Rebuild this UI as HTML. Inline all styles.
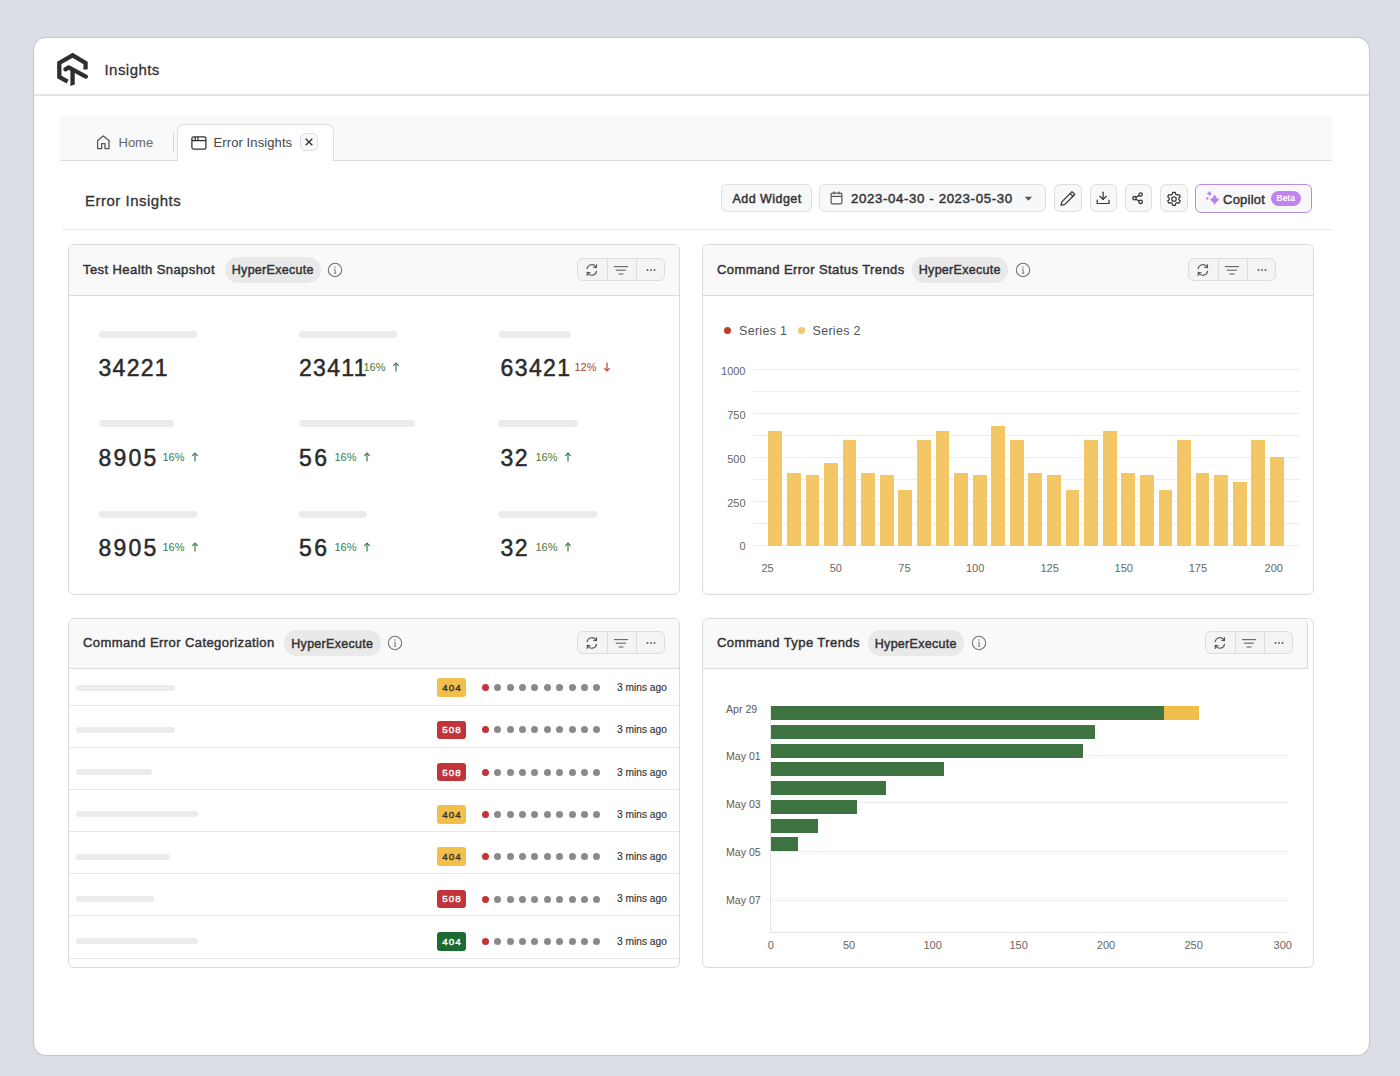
<!DOCTYPE html><html><head><meta charset="utf-8"><style>
*{margin:0;padding:0;box-sizing:border-box}
html,body{width:1400px;height:1076px;overflow:hidden;background:#dcdee6;font-family:"Liberation Sans", sans-serif;color:#333}
.a{position:absolute}
.t{position:absolute;white-space:nowrap;line-height:1}
.med{-webkit-text-stroke:0.45px currentColor}
#frame{position:absolute;left:33px;top:37px;width:1337px;height:1019px;background:#fff;border:1.8px solid #c8c9cc;border-radius:13px;overflow:hidden;box-shadow:0 0 2px rgba(0,0,0,0.05)}
.btn{position:absolute;background:#f7f8f9;border:1px solid #dedfe1;border-radius:6px}
.card{position:absolute;background:#fff;border:1px solid #d9dadc;border-radius:6px;overflow:hidden}
.chead{position:absolute;left:0;top:0;right:0;height:50.6px;background:#f9f9fa;border-bottom:1px solid #d9dadc}
.pill{position:absolute;height:26px;background:#e9e9ea;border-radius:13px}
.sk{position:absolute;height:7px;background:#ebebeb;border-radius:4px}
.vb{position:absolute;width:13.9px;background:#f3c766}
.hb{position:absolute;height:14px;background:#3e7442}
.grp{position:absolute;height:23px;background:#f4f4f5;border:1px solid #dcdcde;border-radius:6px}
.badge{position:absolute;width:28.5px;height:18.5px;border-radius:3px;color:#fff;font-size:9.8px;letter-spacing:1px;text-indent:1px;line-height:18.5px;text-align:center;-webkit-text-stroke:0.4px currentColor}
.dot{position:absolute;width:7px;height:7px;border-radius:50%;background:#8a8a8a}
</style></head><body>
<div id="frame"></div>
<svg class="a" style="left:52px;top:48px" width="42" height="44" viewBox="0 0 42 44">
<g fill="none" stroke="#2f2f2f" stroke-width="4.3">
<polyline points="15.6,33.6 7.3,28.9 7.3,14.9 20.6,7.35 33.55,14.9 33.55,21.6" stroke-linejoin="miter"/>
<polyline points="13.4,21.3 16.7,19.4 33.9,28.6" stroke-linecap="round" stroke-linejoin="round"/>
</g>
<path d="M18.4,21.5 L22.75,23.2 L22.75,36.4 L18.4,37.9 Z" fill="#2f2f2f"/>
</svg>
<div class="t" style="left:104.5px;top:61.8px;font-size:15px;letter-spacing:0.45px;color:#333;-webkit-text-stroke:0.3px #333">Insights</div>
<div class="a" style="left:34px;top:94px;width:1335px;height:1.5px;background:#e4e4e6"></div>
<div class="a" style="left:60px;top:114.5px;width:1272px;height:46px;background:#f9f9fa;border-bottom:1px solid #dcdcde"></div>
<svg class="a" style="left:96px;top:134.5px" width="15" height="15" viewBox="0 0 15 15">
<path d="M1.6,13.6 V5.6 L7.3,1 L13,5.6 V13.6 H9 V8.6 H5.6 V13.6 Z" fill="none" stroke="#555" stroke-width="1.3" stroke-linejoin="round"/></svg>
<div class="t" style="left:118.5px;top:136px;font-size:13px;color:#666">Home</div>
<div class="a" style="left:172.5px;top:132px;width:1px;height:21px;background:#d5d6d8"></div>
<div class="a" style="left:176.5px;top:124px;width:157px;height:37px;background:#fff;border:1px solid #dcdde0;border-bottom:none;border-radius:7px 7px 0 0"></div>
<svg class="a" style="left:190.5px;top:135.5px" width="16" height="14" viewBox="0 0 16 14">
<g fill="none" stroke="#333" stroke-width="1.3"><rect x="0.9" y="0.9" width="14" height="12.2" rx="1.6"/>
<line x1="0.9" y1="4.6" x2="14.9" y2="4.6"/><line x1="4.2" y1="1" x2="4.2" y2="4.6"/><line x1="6.9" y1="1" x2="6.9" y2="4.6"/></g></svg>
<div class="t" style="left:213.5px;top:136px;font-size:13px;letter-spacing:0.1px;color:#444">Error Insights</div>
<div class="btn" style="left:300.3px;top:133.3px;width:18px;height:18px;border-radius:5px;background:#f7f8f9"></div>
<svg class="a" style="left:304.3px;top:137px" width="10" height="10" viewBox="0 0 10 10"><g stroke="#333" stroke-width="1.3"><line x1="1.7" y1="1.7" x2="8.3" y2="8.3"/><line x1="8.3" y1="1.7" x2="1.7" y2="8.3"/></g></svg>
<div class="t" style="left:85px;top:193px;font-size:15px;letter-spacing:0.5px;color:#333;-webkit-text-stroke:0.3px #333">Error Insights</div>
<div class="a" style="left:62px;top:228.5px;width:1270px;height:1px;background:#ececee"></div>
<div class="btn" style="left:720.8px;top:184px;width:91px;height:28px"></div>
<div class="t med" style="left:732.5px;top:192.6px;font-size:12.5px;letter-spacing:0.45px;color:#333">Add Widget</div>
<div class="btn" style="left:819px;top:184px;width:227px;height:28px"></div>
<svg class="a" style="left:830px;top:191px" width="13" height="14" viewBox="0 0 13 14"><g fill="none" stroke="#555" stroke-width="1.2">
<rect x="1.1" y="2.1" width="10.8" height="10.8" rx="1.4"/><line x1="1.1" y1="5.4" x2="11.9" y2="5.4"/><line x1="4" y1="0.6" x2="4" y2="3.2"/><line x1="9" y1="0.6" x2="9" y2="3.2"/></g></svg>
<div class="t med" style="left:851px;top:192.3px;font-size:13.3px;color:#333;letter-spacing:0.6px">2023-04-30 - 2023-05-30</div>
<svg class="a" style="left:1024.3px;top:196.2px" width="9" height="6" viewBox="0 0 9 6"><path d="M0.8,0.8 H8 L4.4,4.8 Z" fill="#555"/></svg>
<div class="btn" style="left:1054px;top:184px;width:27.5px;height:28px"></div>
<div class="btn" style="left:1089.5px;top:184px;width:27.5px;height:28px"></div>
<div class="btn" style="left:1124.8px;top:184px;width:27.5px;height:28px"></div>
<div class="btn" style="left:1160px;top:184px;width:27.5px;height:28px"></div>
<svg class="a" style="left:1054px;top:184.5px" width="28" height="28" viewBox="0 0 28 28"><g fill="none" stroke="#333" stroke-width="1.2" stroke-linejoin="round">
<path d="M7,20.2 L7.8,16.9 L18,6.7 L20.8,9.5 L10.6,19.7 Z"/><line x1="16.2" y1="8.5" x2="19" y2="11.3"/></g></svg>
<svg class="a" style="left:1094px;top:189px" width="18" height="18" viewBox="0 0 18 18"><g fill="none" stroke="#333" stroke-width="1.2" stroke-linecap="round" stroke-linejoin="round">
<line x1="9.1" y1="3.2" x2="9.1" y2="10.3"/><polyline points="5.9,7.3 9.1,10.4 12.3,7.3"/><polyline points="3.2,11.2 3.2,14.5 15,14.5 15,11.2"/></g></svg>
<svg class="a" style="left:1129px;top:189px" width="18" height="18" viewBox="0 0 18 18"><g fill="none" stroke="#333" stroke-width="1.3">
<circle cx="5.5" cy="9.2" r="1.7"/><circle cx="11.6" cy="5.6" r="1.7"/><circle cx="11.6" cy="12.9" r="1.7"/><line x1="6.9" y1="8.3" x2="10" y2="6.6"/><line x1="6.9" y1="10.3" x2="10" y2="12"/></g></svg>
<svg class="a" style="left:1164.5px;top:189.5px" width="18" height="18" viewBox="0 0 24 24"><g fill="none" stroke="#333" stroke-width="1.6" stroke-linejoin="round">
<path d="M10.3,3.2 h3.4 l0.6,2.5 l1.9,1.1 l2.5,-0.8 l1.7,2.9 l-1.9,1.8 v2.2 l1.9,1.8 l-1.7,2.9 l-2.5,-0.8 l-1.9,1.1 l-0.6,2.5 h-3.4 l-0.6,-2.5 l-1.9,-1.1 l-2.5,0.8 l-1.7,-2.9 l1.9,-1.8 v-2.2 l-1.9,-1.8 l1.7,-2.9 l2.5,0.8 l1.9,-1.1 Z"/>
<circle cx="12" cy="12" r="3"/></g></svg>
<div class="btn" style="left:1195px;top:184px;width:116.7px;height:28.5px;border:1.5px solid #b88be3;background:#f8f8fa"></div>
<svg class="a" style="left:1204px;top:190px" width="17" height="17" viewBox="0 0 17 17"><g fill="#b880ea">
<path d="M10.60,4.40 Q11.97,8.22 15.50,9.70 Q11.97,11.18 10.60,15.00 Q9.23,11.18 5.70,9.70 Q9.23,8.22 10.60,4.40 Z"/>
<path d="M5.50,0.80 Q6.26,2.74 8.20,3.50 Q6.26,4.26 5.50,6.20 Q4.74,4.26 2.80,3.50 Q4.74,2.74 5.50,0.80 Z"/>
<path d="M3.30,6.80 Q3.78,7.95 5.00,8.40 Q3.78,8.85 3.30,10.00 Q2.82,8.85 1.60,8.40 Q2.82,7.95 3.30,6.80 Z"/></g></svg>
<div class="t med" style="left:1223px;top:192.5px;font-size:13px;letter-spacing:0.25px;color:#333">Copilot</div>
<div class="a" style="left:1271px;top:190.5px;width:30px;height:15px;border-radius:8px;background:#bf84ee"></div>
<div class="t" style="left:1276.5px;top:194px;font-size:8.5px;font-weight:bold;color:#fff">Beta</div>
<div class="card" style="left:68px;top:244px;width:612px;height:351px">
<div class="chead" style=""></div></div>
<div class="t med" style="left:83px;top:262.8px;font-size:13px;letter-spacing:0.42px;color:#333">Test Health Snapshot</div>
<div class="pill" style="left:224.5px;top:256.8px;width:96.5px"></div>
<div class="t med" style="left:231.8px;top:264.0px;font-size:12.5px;letter-spacing:0.28px;color:#333">HyperExecute</div>
<svg class="a" style="left:327.2px;top:261.8px" width="16" height="16" viewBox="0 0 16 16"><circle cx="8" cy="8" r="6.7" fill="none" stroke="#707070" stroke-width="1.05"/><circle cx="8" cy="5" r="0.7" fill="#707070"/><path d="M7.1,7.2 H8.1 V11.1 M7,11.1 H9.2" fill="none" stroke="#707070" stroke-width="0.95"/></svg>
<div class="grp" style="left:577.0px;top:257.8px;width:88px"></div>
<div class="a" style="left:606.5px;top:257.8px;width:1px;height:23px;background:#dcdcde"></div>
<div class="a" style="left:636.0px;top:257.8px;width:1px;height:23px;background:#dcdcde"></div>
<svg class="a" style="left:583.0px;top:260.90000000000003px" width="18" height="18" viewBox="0 0 18 18"><g fill="none" stroke="#555" stroke-width="1.15" stroke-linecap="round" stroke-linejoin="round"><path d="M4.1,7.6 A4.9,4.9 0 0 1 13.2,6.2"/><path d="M13.5,3.7 L13.4,6.6 L10.6,6.3"/><path d="M13.5,10.3 A4.9,4.9 0 0 1 4.4,11.7"/><path d="M4.2,14.4 L4.3,11.4 L7.1,11.8"/></g></svg>
<svg class="a" style="left:612.3px;top:260.90000000000003px" width="18" height="18" viewBox="0 0 18 18"><g stroke="#666" stroke-width="1.1" stroke-linecap="butt"><line x1="1.9" y1="5.6" x2="16.1" y2="5.6"/><line x1="3.9" y1="9.2" x2="13.9" y2="9.2"/><line x1="6.6" y1="13" x2="11.4" y2="13"/></g></svg>
<svg class="a" style="left:641.6px;top:260.90000000000003px" width="18" height="18" viewBox="0 0 18 18"><g fill="#555"><circle cx="5.5" cy="9" r="0.9"/><circle cx="9" cy="9" r="0.9"/><circle cx="12.5" cy="9" r="0.9"/></g></svg>
<div class="sk" style="left:98.5px;top:330.5px;width:98.5px"></div>
<div class="sk" style="left:298.5px;top:330.5px;width:98.5px"></div>
<div class="sk" style="left:498.5px;top:330.5px;width:72.5px"></div>
<div class="sk" style="left:98.5px;top:420.0px;width:75.0px"></div>
<div class="sk" style="left:298.5px;top:420.0px;width:116.0px"></div>
<div class="sk" style="left:498px;top:420.0px;width:79.5px"></div>
<div class="sk" style="left:98.5px;top:511.0px;width:98.5px"></div>
<div class="sk" style="left:298.5px;top:511.0px;width:68.5px"></div>
<div class="sk" style="left:498px;top:511.0px;width:99px"></div>
<div class="t" style="left:98.5px;top:356.5px;font-size:23px;letter-spacing:1.3px;color:#2b2b2b;-webkit-text-stroke:0.5px #2b2b2b">34221</div>
<div class="t" style="left:299px;top:356.5px;font-size:23px;letter-spacing:1.3px;color:#2b2b2b;-webkit-text-stroke:0.5px #2b2b2b">23411</div>
<div class="t" style="left:363.5px;top:361.5px;font-size:11px;color:#3b7a45">16%</div>
<svg class="a" style="left:392.0px;top:362px" width="8" height="10" viewBox="0 0 8 10"><g fill="none" stroke="#3b7a45" stroke-width="1.2"><line x1="4" y1="1" x2="4" y2="9.5"/><polyline points="1.3,3.8 4,1 6.7,3.8"/></g></svg>
<div class="t" style="left:500.5px;top:356.5px;font-size:23px;letter-spacing:1.4px;color:#2b2b2b;-webkit-text-stroke:0.5px #2b2b2b">63421</div>
<div class="t" style="left:574.5px;top:361.5px;font-size:11px;color:#b8422e">12%</div>
<svg class="a" style="left:603.0px;top:362px" width="8" height="10" viewBox="0 0 8 10"><g fill="none" stroke="#b8422e" stroke-width="1.2"><line x1="4" y1="0.5" x2="4" y2="9"/><polyline points="1.3,6.2 4,9 6.7,6.2"/></g></svg>
<div class="t" style="left:98.5px;top:446.5px;font-size:23px;letter-spacing:2.2px;color:#2b2b2b;-webkit-text-stroke:0.5px #2b2b2b">8905</div>
<div class="t" style="left:162.5px;top:451.5px;font-size:11px;color:#3b7a45">16%</div>
<svg class="a" style="left:191.0px;top:452px" width="8" height="10" viewBox="0 0 8 10"><g fill="none" stroke="#3b7a45" stroke-width="1.2"><line x1="4" y1="1" x2="4" y2="9.5"/><polyline points="1.3,3.8 4,1 6.7,3.8"/></g></svg>
<div class="t" style="left:299px;top:446.5px;font-size:23px;letter-spacing:2.4px;color:#2b2b2b;-webkit-text-stroke:0.5px #2b2b2b">56</div>
<div class="t" style="left:334.5px;top:451.5px;font-size:11px;color:#3b7a45">16%</div>
<svg class="a" style="left:363.0px;top:452px" width="8" height="10" viewBox="0 0 8 10"><g fill="none" stroke="#3b7a45" stroke-width="1.2"><line x1="4" y1="1" x2="4" y2="9.5"/><polyline points="1.3,3.8 4,1 6.7,3.8"/></g></svg>
<div class="t" style="left:500.5px;top:446.5px;font-size:23px;letter-spacing:1.5px;color:#2b2b2b;-webkit-text-stroke:0.5px #2b2b2b">32</div>
<div class="t" style="left:535.5px;top:451.5px;font-size:11px;color:#3b7a45">16%</div>
<svg class="a" style="left:564.0px;top:452px" width="8" height="10" viewBox="0 0 8 10"><g fill="none" stroke="#3b7a45" stroke-width="1.2"><line x1="4" y1="1" x2="4" y2="9.5"/><polyline points="1.3,3.8 4,1 6.7,3.8"/></g></svg>
<div class="t" style="left:98.5px;top:536.5px;font-size:23px;letter-spacing:2.2px;color:#2b2b2b;-webkit-text-stroke:0.5px #2b2b2b">8905</div>
<div class="t" style="left:162.5px;top:541.5px;font-size:11px;color:#3b7a45">16%</div>
<svg class="a" style="left:191.0px;top:542px" width="8" height="10" viewBox="0 0 8 10"><g fill="none" stroke="#3b7a45" stroke-width="1.2"><line x1="4" y1="1" x2="4" y2="9.5"/><polyline points="1.3,3.8 4,1 6.7,3.8"/></g></svg>
<div class="t" style="left:299px;top:536.5px;font-size:23px;letter-spacing:2.4px;color:#2b2b2b;-webkit-text-stroke:0.5px #2b2b2b">56</div>
<div class="t" style="left:334.5px;top:541.5px;font-size:11px;color:#3b7a45">16%</div>
<svg class="a" style="left:363.0px;top:542px" width="8" height="10" viewBox="0 0 8 10"><g fill="none" stroke="#3b7a45" stroke-width="1.2"><line x1="4" y1="1" x2="4" y2="9.5"/><polyline points="1.3,3.8 4,1 6.7,3.8"/></g></svg>
<div class="t" style="left:500.5px;top:536.5px;font-size:23px;letter-spacing:1.5px;color:#2b2b2b;-webkit-text-stroke:0.5px #2b2b2b">32</div>
<div class="t" style="left:535.5px;top:541.5px;font-size:11px;color:#3b7a45">16%</div>
<svg class="a" style="left:564.0px;top:542px" width="8" height="10" viewBox="0 0 8 10"><g fill="none" stroke="#3b7a45" stroke-width="1.2"><line x1="4" y1="1" x2="4" y2="9.5"/><polyline points="1.3,3.8 4,1 6.7,3.8"/></g></svg>
<div class="card" style="left:702px;top:244px;width:612px;height:351px">
<div class="chead" style=""></div></div>
<div class="t med" style="left:717px;top:262.8px;font-size:13px;letter-spacing:0.42px;color:#333">Command Error Status Trends</div>
<div class="pill" style="left:911.5px;top:256.8px;width:96.5px"></div>
<div class="t med" style="left:918.8px;top:264.0px;font-size:12.5px;letter-spacing:0.28px;color:#333">HyperExecute</div>
<svg class="a" style="left:1014.7px;top:261.8px" width="16" height="16" viewBox="0 0 16 16"><circle cx="8" cy="8" r="6.7" fill="none" stroke="#707070" stroke-width="1.05"/><circle cx="8" cy="5" r="0.7" fill="#707070"/><path d="M7.1,7.2 H8.1 V11.1 M7,11.1 H9.2" fill="none" stroke="#707070" stroke-width="0.95"/></svg>
<div class="grp" style="left:1188.0px;top:257.8px;width:88px"></div>
<div class="a" style="left:1217.5px;top:257.8px;width:1px;height:23px;background:#dcdcde"></div>
<div class="a" style="left:1247.0px;top:257.8px;width:1px;height:23px;background:#dcdcde"></div>
<svg class="a" style="left:1194.0px;top:260.90000000000003px" width="18" height="18" viewBox="0 0 18 18"><g fill="none" stroke="#555" stroke-width="1.15" stroke-linecap="round" stroke-linejoin="round"><path d="M4.1,7.6 A4.9,4.9 0 0 1 13.2,6.2"/><path d="M13.5,3.7 L13.4,6.6 L10.6,6.3"/><path d="M13.5,10.3 A4.9,4.9 0 0 1 4.4,11.7"/><path d="M4.2,14.4 L4.3,11.4 L7.1,11.8"/></g></svg>
<svg class="a" style="left:1223.3px;top:260.90000000000003px" width="18" height="18" viewBox="0 0 18 18"><g stroke="#666" stroke-width="1.1" stroke-linecap="butt"><line x1="1.9" y1="5.6" x2="16.1" y2="5.6"/><line x1="3.9" y1="9.2" x2="13.9" y2="9.2"/><line x1="6.6" y1="13" x2="11.4" y2="13"/></g></svg>
<svg class="a" style="left:1252.6px;top:260.90000000000003px" width="18" height="18" viewBox="0 0 18 18"><g fill="#555"><circle cx="5.5" cy="9" r="0.9"/><circle cx="9" cy="9" r="0.9"/><circle cx="12.5" cy="9" r="0.9"/></g></svg>
<div class="a" style="left:724px;top:327.2px;width:7px;height:7px;border-radius:50%;background:#c0392b"></div>
<div class="t" style="left:739px;top:324.7px;font-size:12.5px;letter-spacing:0.3px;color:#555">Series 1</div>
<div class="a" style="left:797.7px;top:327.2px;width:7px;height:7px;border-radius:50%;background:#f3c766"></div>
<div class="t" style="left:812.5px;top:324.7px;font-size:12.5px;letter-spacing:0.3px;color:#555">Series 2</div>
<div class="a" style="left:753px;top:369.2px;width:547px;height:1px;background:#eeeeee"></div>
<div class="a" style="left:753px;top:391.2px;width:547px;height:1px;background:#eeeeee"></div>
<div class="a" style="left:753px;top:413.3px;width:547px;height:1px;background:#eeeeee"></div>
<div class="a" style="left:753px;top:435.3px;width:547px;height:1px;background:#eeeeee"></div>
<div class="a" style="left:753px;top:457.3px;width:547px;height:1px;background:#eeeeee"></div>
<div class="a" style="left:753px;top:479.4px;width:547px;height:1px;background:#eeeeee"></div>
<div class="a" style="left:753px;top:501.4px;width:547px;height:1px;background:#eeeeee"></div>
<div class="a" style="left:753px;top:523.4px;width:547px;height:1px;background:#eeeeee"></div>
<div class="a" style="left:753px;top:545.4px;width:547px;height:1px;background:#eeeeee"></div>
<div class="t" style="right:654.5px;top:365.8px;font-size:11px;color:#666;text-align:right">1000</div>
<div class="t" style="right:654.5px;top:409.59999999999997px;font-size:11px;color:#666;text-align:right">750</div>
<div class="t" style="right:654.5px;top:453.59999999999997px;font-size:11px;color:#666;text-align:right">500</div>
<div class="t" style="right:654.5px;top:497.7px;font-size:11px;color:#666;text-align:right">250</div>
<div class="t" style="right:654.5px;top:541.4000000000001px;font-size:11px;color:#666;text-align:right">0</div>
<div class="vb" style="left:768.3px;top:431.0px;height:114.9px"></div>
<div class="vb" style="left:786.9px;top:472.8px;height:73.1px"></div>
<div class="vb" style="left:805.5px;top:475.4px;height:70.5px"></div>
<div class="vb" style="left:824.0px;top:462.7px;height:83.2px"></div>
<div class="vb" style="left:842.6px;top:440.0px;height:105.9px"></div>
<div class="vb" style="left:861.2px;top:472.8px;height:73.1px"></div>
<div class="vb" style="left:879.8px;top:475.4px;height:70.5px"></div>
<div class="vb" style="left:898.4px;top:490.4px;height:55.5px"></div>
<div class="vb" style="left:916.9px;top:440.0px;height:105.9px"></div>
<div class="vb" style="left:935.5px;top:431.0px;height:114.9px"></div>
<div class="vb" style="left:954.1px;top:472.8px;height:73.1px"></div>
<div class="vb" style="left:972.7px;top:475.4px;height:70.5px"></div>
<div class="vb" style="left:991.3px;top:426.1px;height:119.8px"></div>
<div class="vb" style="left:1009.8px;top:440.0px;height:105.9px"></div>
<div class="vb" style="left:1028.4px;top:472.8px;height:73.1px"></div>
<div class="vb" style="left:1047.0px;top:475.4px;height:70.5px"></div>
<div class="vb" style="left:1065.6px;top:490.4px;height:55.5px"></div>
<div class="vb" style="left:1084.2px;top:440.0px;height:105.9px"></div>
<div class="vb" style="left:1102.7px;top:431.0px;height:114.9px"></div>
<div class="vb" style="left:1121.3px;top:472.8px;height:73.1px"></div>
<div class="vb" style="left:1139.9px;top:475.4px;height:70.5px"></div>
<div class="vb" style="left:1158.5px;top:490.4px;height:55.5px"></div>
<div class="vb" style="left:1177.1px;top:440.0px;height:105.9px"></div>
<div class="vb" style="left:1195.6px;top:472.8px;height:73.1px"></div>
<div class="vb" style="left:1214.2px;top:475.4px;height:70.5px"></div>
<div class="vb" style="left:1232.8px;top:481.8px;height:64.1px"></div>
<div class="vb" style="left:1251.4px;top:440.0px;height:105.9px"></div>
<div class="vb" style="left:1270.0px;top:456.9px;height:89.0px"></div>
<div class="t" style="left:737.5px;width:60px;text-align:center;top:563px;font-size:11px;color:#666">25</div>
<div class="t" style="left:805.8px;width:60px;text-align:center;top:563px;font-size:11px;color:#666">50</div>
<div class="t" style="left:874.4px;width:60px;text-align:center;top:563px;font-size:11px;color:#666">75</div>
<div class="t" style="left:945.2px;width:60px;text-align:center;top:563px;font-size:11px;color:#666">100</div>
<div class="t" style="left:1019.5999999999999px;width:60px;text-align:center;top:563px;font-size:11px;color:#666">125</div>
<div class="t" style="left:1093.8px;width:60px;text-align:center;top:563px;font-size:11px;color:#666">150</div>
<div class="t" style="left:1167.9px;width:60px;text-align:center;top:563px;font-size:11px;color:#666">175</div>
<div class="t" style="left:1243.8px;width:60px;text-align:center;top:563px;font-size:11px;color:#666">200</div>
<div class="card" style="left:68px;top:617.5px;width:612px;height:350px">
<div class="chead" style=""></div></div>
<div class="t med" style="left:83px;top:636.3px;font-size:13px;letter-spacing:0.42px;color:#333">Command Error Categorization</div>
<div class="pill" style="left:284px;top:630.3px;width:96.5px"></div>
<div class="t med" style="left:291.3px;top:637.5px;font-size:12.5px;letter-spacing:0.28px;color:#333">HyperExecute</div>
<svg class="a" style="left:387.2px;top:635.3px" width="16" height="16" viewBox="0 0 16 16"><circle cx="8" cy="8" r="6.7" fill="none" stroke="#707070" stroke-width="1.05"/><circle cx="8" cy="5" r="0.7" fill="#707070"/><path d="M7.1,7.2 H8.1 V11.1 M7,11.1 H9.2" fill="none" stroke="#707070" stroke-width="0.95"/></svg>
<div class="grp" style="left:577.0px;top:631.3px;width:88px"></div>
<div class="a" style="left:606.5px;top:631.3px;width:1px;height:23px;background:#dcdcde"></div>
<div class="a" style="left:636.0px;top:631.3px;width:1px;height:23px;background:#dcdcde"></div>
<svg class="a" style="left:583.0px;top:634.4px" width="18" height="18" viewBox="0 0 18 18"><g fill="none" stroke="#555" stroke-width="1.15" stroke-linecap="round" stroke-linejoin="round"><path d="M4.1,7.6 A4.9,4.9 0 0 1 13.2,6.2"/><path d="M13.5,3.7 L13.4,6.6 L10.6,6.3"/><path d="M13.5,10.3 A4.9,4.9 0 0 1 4.4,11.7"/><path d="M4.2,14.4 L4.3,11.4 L7.1,11.8"/></g></svg>
<svg class="a" style="left:612.3px;top:634.4px" width="18" height="18" viewBox="0 0 18 18"><g stroke="#666" stroke-width="1.1" stroke-linecap="butt"><line x1="1.9" y1="5.6" x2="16.1" y2="5.6"/><line x1="3.9" y1="9.2" x2="13.9" y2="9.2"/><line x1="6.6" y1="13" x2="11.4" y2="13"/></g></svg>
<svg class="a" style="left:641.6px;top:634.4px" width="18" height="18" viewBox="0 0 18 18"><g fill="#555"><circle cx="5.5" cy="9" r="0.9"/><circle cx="9" cy="9" r="0.9"/><circle cx="12.5" cy="9" r="0.9"/></g></svg>
<div class="sk" style="left:76px;top:684.6px;width:98.6px;height:6px"></div>
<div class="badge" style="left:437.3px;top:678.4px;background:#f2bf4c;color:#333"><span style="position:relative;top:0.8px">404</span></div>
<div class="dot" style="left:482.1px;top:684.1px;background:#c0343a"></div>
<div class="dot" style="left:494.2px;top:684.1px"></div>
<div class="dot" style="left:506.6px;top:684.1px"></div>
<div class="dot" style="left:519.0px;top:684.1px"></div>
<div class="dot" style="left:531.4px;top:684.1px"></div>
<div class="dot" style="left:543.8px;top:684.1px"></div>
<div class="dot" style="left:556.2px;top:684.1px"></div>
<div class="dot" style="left:568.6px;top:684.1px"></div>
<div class="dot" style="left:581.0px;top:684.1px"></div>
<div class="dot" style="left:593.4px;top:684.1px"></div>
<div class="t" style="left:617px;top:683.0px;font-size:10.2px;color:#333;-webkit-text-stroke:0.15px #333">3 mins ago</div>
<div class="a" style="left:69px;top:704.5px;width:610px;height:1px;background:#e6e6e8"></div>
<div class="sk" style="left:76px;top:726.9px;width:98.6px;height:6px"></div>
<div class="badge" style="left:437.3px;top:720.6px;background:#c0343a;color:#fff"><span style="position:relative;top:0.8px">508</span></div>
<div class="dot" style="left:482.1px;top:726.4px;background:#c0343a"></div>
<div class="dot" style="left:494.2px;top:726.4px"></div>
<div class="dot" style="left:506.6px;top:726.4px"></div>
<div class="dot" style="left:519.0px;top:726.4px"></div>
<div class="dot" style="left:531.4px;top:726.4px"></div>
<div class="dot" style="left:543.8px;top:726.4px"></div>
<div class="dot" style="left:556.2px;top:726.4px"></div>
<div class="dot" style="left:568.6px;top:726.4px"></div>
<div class="dot" style="left:581.0px;top:726.4px"></div>
<div class="dot" style="left:593.4px;top:726.4px"></div>
<div class="t" style="left:617px;top:725.3px;font-size:10.2px;color:#333;-webkit-text-stroke:0.15px #333">3 mins ago</div>
<div class="a" style="left:69px;top:746.7px;width:610px;height:1px;background:#e6e6e8"></div>
<div class="sk" style="left:76px;top:769.1px;width:75.8px;height:6px"></div>
<div class="badge" style="left:437.3px;top:762.9px;background:#c0343a;color:#fff"><span style="position:relative;top:0.8px">508</span></div>
<div class="dot" style="left:482.1px;top:768.6px;background:#c0343a"></div>
<div class="dot" style="left:494.2px;top:768.6px"></div>
<div class="dot" style="left:506.6px;top:768.6px"></div>
<div class="dot" style="left:519.0px;top:768.6px"></div>
<div class="dot" style="left:531.4px;top:768.6px"></div>
<div class="dot" style="left:543.8px;top:768.6px"></div>
<div class="dot" style="left:556.2px;top:768.6px"></div>
<div class="dot" style="left:568.6px;top:768.6px"></div>
<div class="dot" style="left:581.0px;top:768.6px"></div>
<div class="dot" style="left:593.4px;top:768.6px"></div>
<div class="t" style="left:617px;top:767.5px;font-size:10.2px;color:#333;-webkit-text-stroke:0.15px #333">3 mins ago</div>
<div class="a" style="left:69px;top:788.8px;width:610px;height:1px;background:#e6e6e8"></div>
<div class="sk" style="left:76px;top:811.4px;width:122.0px;height:6px"></div>
<div class="badge" style="left:437.3px;top:805.2px;background:#f2bf4c;color:#333"><span style="position:relative;top:0.8px">404</span></div>
<div class="dot" style="left:482.1px;top:810.9px;background:#c0343a"></div>
<div class="dot" style="left:494.2px;top:810.9px"></div>
<div class="dot" style="left:506.6px;top:810.9px"></div>
<div class="dot" style="left:519.0px;top:810.9px"></div>
<div class="dot" style="left:531.4px;top:810.9px"></div>
<div class="dot" style="left:543.8px;top:810.9px"></div>
<div class="dot" style="left:556.2px;top:810.9px"></div>
<div class="dot" style="left:568.6px;top:810.9px"></div>
<div class="dot" style="left:581.0px;top:810.9px"></div>
<div class="dot" style="left:593.4px;top:810.9px"></div>
<div class="t" style="left:617px;top:809.8px;font-size:10.2px;color:#333;-webkit-text-stroke:0.15px #333">3 mins ago</div>
<div class="a" style="left:69px;top:831.0px;width:610px;height:1px;background:#e6e6e8"></div>
<div class="sk" style="left:76px;top:853.7px;width:93.7px;height:6px"></div>
<div class="badge" style="left:437.3px;top:847.4px;background:#f2bf4c;color:#333"><span style="position:relative;top:0.8px">404</span></div>
<div class="dot" style="left:482.1px;top:853.2px;background:#c0343a"></div>
<div class="dot" style="left:494.2px;top:853.2px"></div>
<div class="dot" style="left:506.6px;top:853.2px"></div>
<div class="dot" style="left:519.0px;top:853.2px"></div>
<div class="dot" style="left:531.4px;top:853.2px"></div>
<div class="dot" style="left:543.8px;top:853.2px"></div>
<div class="dot" style="left:556.2px;top:853.2px"></div>
<div class="dot" style="left:568.6px;top:853.2px"></div>
<div class="dot" style="left:581.0px;top:853.2px"></div>
<div class="dot" style="left:593.4px;top:853.2px"></div>
<div class="t" style="left:617px;top:852.1px;font-size:10.2px;color:#333;-webkit-text-stroke:0.15px #333">3 mins ago</div>
<div class="a" style="left:69px;top:873.2px;width:610px;height:1px;background:#e6e6e8"></div>
<div class="sk" style="left:76px;top:896.0px;width:77.7px;height:6px"></div>
<div class="badge" style="left:437.3px;top:889.7px;background:#c0343a;color:#fff"><span style="position:relative;top:0.8px">508</span></div>
<div class="dot" style="left:482.1px;top:895.5px;background:#c0343a"></div>
<div class="dot" style="left:494.2px;top:895.5px"></div>
<div class="dot" style="left:506.6px;top:895.5px"></div>
<div class="dot" style="left:519.0px;top:895.5px"></div>
<div class="dot" style="left:531.4px;top:895.5px"></div>
<div class="dot" style="left:543.8px;top:895.5px"></div>
<div class="dot" style="left:556.2px;top:895.5px"></div>
<div class="dot" style="left:568.6px;top:895.5px"></div>
<div class="dot" style="left:581.0px;top:895.5px"></div>
<div class="dot" style="left:593.4px;top:895.5px"></div>
<div class="t" style="left:617px;top:894.4px;font-size:10.2px;color:#333;-webkit-text-stroke:0.15px #333">3 mins ago</div>
<div class="a" style="left:69px;top:915.4px;width:610px;height:1px;background:#e6e6e8"></div>
<div class="sk" style="left:76px;top:938.2px;width:122.0px;height:6px"></div>
<div class="badge" style="left:437.3px;top:932.0px;background:#1e6b32;color:#fff"><span style="position:relative;top:0.8px">404</span></div>
<div class="dot" style="left:482.1px;top:937.7px;background:#c0343a"></div>
<div class="dot" style="left:494.2px;top:937.7px"></div>
<div class="dot" style="left:506.6px;top:937.7px"></div>
<div class="dot" style="left:519.0px;top:937.7px"></div>
<div class="dot" style="left:531.4px;top:937.7px"></div>
<div class="dot" style="left:543.8px;top:937.7px"></div>
<div class="dot" style="left:556.2px;top:937.7px"></div>
<div class="dot" style="left:568.6px;top:937.7px"></div>
<div class="dot" style="left:581.0px;top:937.7px"></div>
<div class="dot" style="left:593.4px;top:937.7px"></div>
<div class="t" style="left:617px;top:936.6px;font-size:10.2px;color:#333;-webkit-text-stroke:0.15px #333">3 mins ago</div>
<div class="a" style="left:69px;top:957.5px;width:610px;height:1px;background:#e6e6e8"></div>
<div class="card" style="left:702px;top:617.5px;width:612px;height:350px">
<div class="chead" style="width:605px;right:auto;border-right:1px solid #d9dadc;border-radius:0 6px 0 0;"></div></div>
<div class="t med" style="left:717px;top:636.3px;font-size:13px;letter-spacing:0.42px;color:#333">Command Type Trends</div>
<div class="pill" style="left:867.5px;top:630.3px;width:96.5px"></div>
<div class="t med" style="left:874.8px;top:637.5px;font-size:12.5px;letter-spacing:0.28px;color:#333">HyperExecute</div>
<svg class="a" style="left:971.2px;top:635.3px" width="16" height="16" viewBox="0 0 16 16"><circle cx="8" cy="8" r="6.7" fill="none" stroke="#707070" stroke-width="1.05"/><circle cx="8" cy="5" r="0.7" fill="#707070"/><path d="M7.1,7.2 H8.1 V11.1 M7,11.1 H9.2" fill="none" stroke="#707070" stroke-width="0.95"/></svg>
<div class="grp" style="left:1205.0px;top:631.3px;width:88px"></div>
<div class="a" style="left:1234.5px;top:631.3px;width:1px;height:23px;background:#dcdcde"></div>
<div class="a" style="left:1264.0px;top:631.3px;width:1px;height:23px;background:#dcdcde"></div>
<svg class="a" style="left:1211.0px;top:634.4px" width="18" height="18" viewBox="0 0 18 18"><g fill="none" stroke="#555" stroke-width="1.15" stroke-linecap="round" stroke-linejoin="round"><path d="M4.1,7.6 A4.9,4.9 0 0 1 13.2,6.2"/><path d="M13.5,3.7 L13.4,6.6 L10.6,6.3"/><path d="M13.5,10.3 A4.9,4.9 0 0 1 4.4,11.7"/><path d="M4.2,14.4 L4.3,11.4 L7.1,11.8"/></g></svg>
<svg class="a" style="left:1240.3px;top:634.4px" width="18" height="18" viewBox="0 0 18 18"><g stroke="#666" stroke-width="1.1" stroke-linecap="butt"><line x1="1.9" y1="5.6" x2="16.1" y2="5.6"/><line x1="3.9" y1="9.2" x2="13.9" y2="9.2"/><line x1="6.6" y1="13" x2="11.4" y2="13"/></g></svg>
<svg class="a" style="left:1269.6px;top:634.4px" width="18" height="18" viewBox="0 0 18 18"><g fill="#555"><circle cx="5.5" cy="9" r="0.9"/><circle cx="9" cy="9" r="0.9"/><circle cx="12.5" cy="9" r="0.9"/></g></svg>
<div class="t" style="left:726px;top:703.5px;font-size:10.6px;color:#5a5a5a">Apr 29</div>
<div class="t" style="left:726px;top:750.8px;font-size:10.6px;color:#5a5a5a">May 01</div>
<div class="t" style="left:726px;top:798.8px;font-size:10.6px;color:#5a5a5a">May 03</div>
<div class="t" style="left:726px;top:846.5px;font-size:10.6px;color:#5a5a5a">May 05</div>
<div class="t" style="left:726px;top:894.7px;font-size:10.6px;color:#5a5a5a">May 07</div>
<div class="a" style="left:770px;top:755.0px;width:517px;height:0;border-top:1px dotted #dcdcdc"></div>
<div class="a" style="left:770px;top:801.5px;width:517px;height:0;border-top:1px dotted #dcdcdc"></div>
<div class="a" style="left:770px;top:851.0px;width:517px;height:0;border-top:1px dotted #dcdcdc"></div>
<div class="a" style="left:770px;top:899.5px;width:517px;height:0;border-top:1px dotted #dcdcdc"></div>
<div class="a" style="left:769.5px;top:706px;width:1px;height:226px;background:#e4e4e4"></div>
<div class="a" style="left:770px;top:931.5px;width:517px;height:1px;background:#e2e2e2"></div>
<div class="t" style="left:740.7px;width:60px;text-align:center;top:940px;font-size:11px;color:#666">0</div>
<div class="t" style="left:819px;width:60px;text-align:center;top:940px;font-size:11px;color:#666">50</div>
<div class="t" style="left:902.7px;width:60px;text-align:center;top:940px;font-size:11px;color:#666">100</div>
<div class="t" style="left:988.6px;width:60px;text-align:center;top:940px;font-size:11px;color:#666">150</div>
<div class="t" style="left:1076px;width:60px;text-align:center;top:940px;font-size:11px;color:#666">200</div>
<div class="t" style="left:1163.7px;width:60px;text-align:center;top:940px;font-size:11px;color:#666">250</div>
<div class="t" style="left:1252.8px;width:60px;text-align:center;top:940px;font-size:11px;color:#666">300</div>
<div class="hb" style="left:770.5px;top:706.0px;width:393.0px"></div>
<div class="hb" style="left:770.5px;top:724.8px;width:324.2px"></div>
<div class="hb" style="left:770.5px;top:743.5px;width:312.5px"></div>
<div class="hb" style="left:770.5px;top:762.2px;width:173.0px"></div>
<div class="hb" style="left:770.5px;top:781.0px;width:115.8px"></div>
<div class="hb" style="left:770.5px;top:799.8px;width:86.5px"></div>
<div class="hb" style="left:770.5px;top:818.5px;width:47.4px"></div>
<div class="hb" style="left:770.5px;top:837.2px;width:27.6px"></div>
<div class="hb" style="left:1163.5px;top:706px;width:35px;background:#f1be4c"></div>
</body></html>
